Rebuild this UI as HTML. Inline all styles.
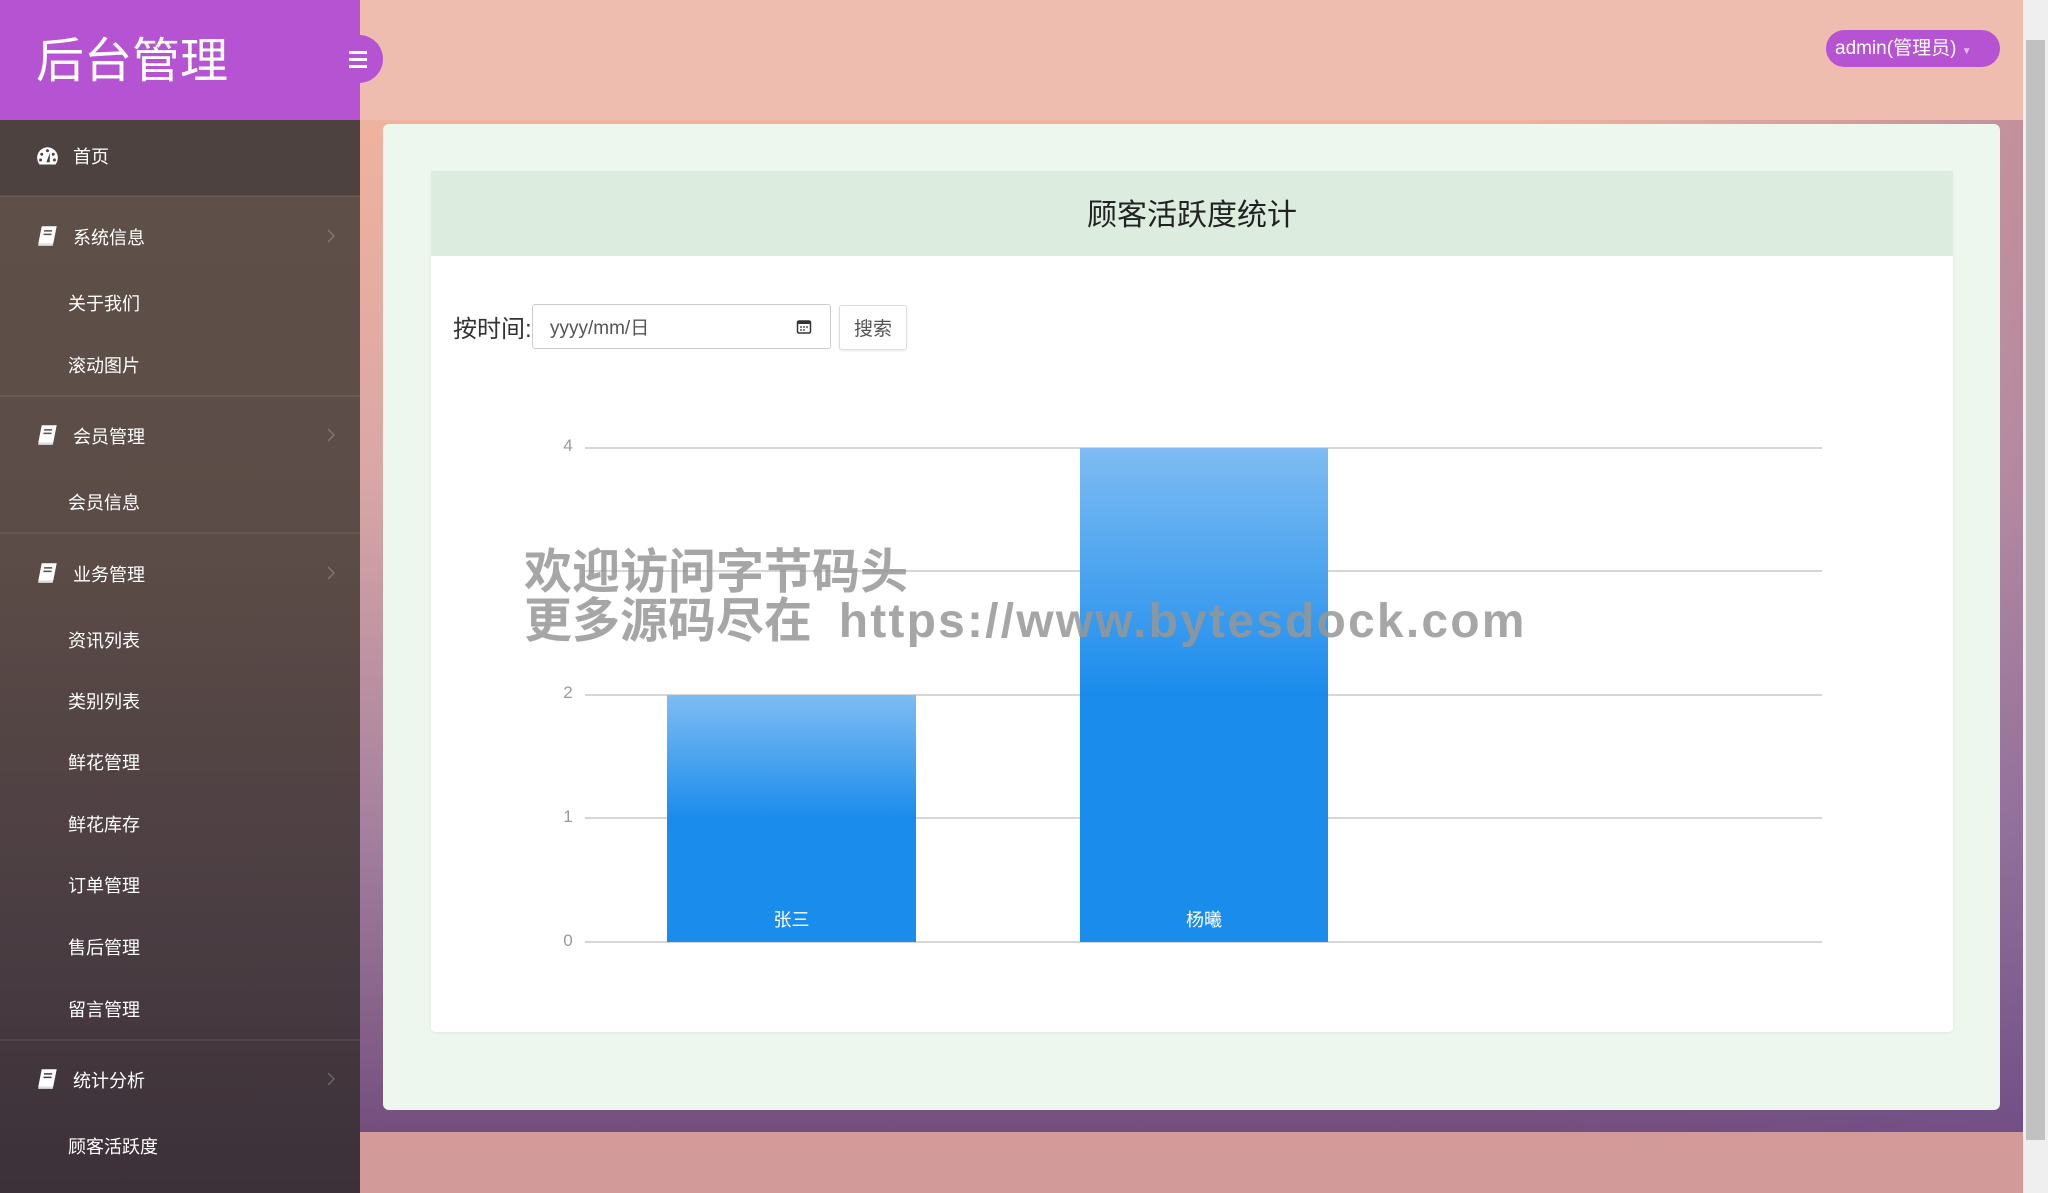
<!DOCTYPE html>
<html><head><meta charset="utf-8"><style>
*{margin:0;padding:0;box-sizing:border-box}
body{width:2048px;height:1193px;overflow:hidden;position:relative;font-family:"Liberation Sans","Noto Sans CJK SC",sans-serif;background:linear-gradient(180deg,#f6b79c 0%,#d9a7a6 40%,#a3809e 70%,#6a4577 100%)}
.bgr{position:absolute;left:360px;top:0;width:1663px;height:1193px;background:linear-gradient(90deg,rgba(0,0,0,0) 70%,rgba(110,80,150,.35) 100%)}
.side{position:absolute;left:0;top:120px;width:360px;height:1073px;background:linear-gradient(180deg,#5f5049 0%,#5c4c47 40%,#4a3d42 75%,#3c3039 100%)}
.logo{position:absolute;left:0;top:0;width:360px;height:120px;background:#b653d3;color:#fff;font-size:48px;line-height:124px;padding-left:36px}
.tog{position:absolute;left:335px;top:35px;width:48px;height:48px;border-radius:50%;background:#b653d3}
.tog i{position:absolute;left:14px;width:18px;height:3px;background:#fff}
.item{position:absolute;left:0;width:360px;color:#fff;font-size:18px}
.hd{padding-left:73px}
.sub{padding-left:68px}
.sep{position:absolute;left:0;width:360px;height:2px;background:rgba(255,255,255,.07)}
.ico{position:absolute;left:36px;width:23px;height:23px}
.chev{position:absolute;left:324px;width:14px;height:14px}
.top{position:absolute;left:360px;top:0;width:1663px;height:120px;background:#efbcb0}
.pill{position:absolute;left:1826px;top:30px;width:174px;height:37px;border-radius:19px;background:#b653d3;color:#fff;font-size:19px;line-height:37px;padding-left:9px}
.card{position:absolute;left:383px;top:124px;width:1617px;height:986px;background:#edf7ee;border-radius:6px}
.panel{position:absolute;left:431px;top:171px;width:1522px;height:861px;background:#fff;border-radius:4px;box-shadow:0 1px 3px rgba(0,0,0,.06)}
.ph{height:85px;background:#dcede0;text-align:center;font-size:30px;line-height:90px;color:#222}
.foot{position:absolute;left:360px;top:1132px;width:1663px;height:61px;background:#d29a98}
.sb{position:absolute;left:2023px;top:0;width:25px;height:1193px;background:#efefef}
.grid{position:absolute;left:585px;width:1237px;height:2px;background:#d6d6d6}
.yl{position:absolute;left:558px;color:#999;font-size:17px;width:20px;text-align:center}
.bar{position:absolute;background:linear-gradient(180deg,#7fbcf3 0%,#1a8cec 50%,#1a8cec 100%)}
.bl{position:absolute;bottom:10px;width:100%;text-align:center;color:#fff;font-size:18px}
.wm{position:absolute;left:524px;color:rgba(150,150,150,.85);font-weight:bold;font-size:48px;line-height:48px;white-space:nowrap}
</style></head><body>
<div class="bgr"></div>
<div class="top"></div>
<div class="card"></div>
<div class="foot"></div>
<div class="side"></div>
<div style="position:absolute;left:0;top:120px;width:360px;height:76px;background:#4e4240"></div>
<div class="logo">后台管理</div>
<div class="tog"><i style="top:16px"></i><i style="top:23px"></i><i style="top:30px"></i></div>

<svg class="ico" style="top:145px" viewBox="0 0 20 20"><path d="M10 2A9 9 0 0 0 1 11c0 2.5 1 4.5 2 6h14c1-1.5 2-3.5 2-6a9 9 0 0 0-9-9z" fill="#fff"/><circle cx="10" cy="5" r="1.3" fill="#4e4240"/><circle cx="5" cy="8" r="1.3" fill="#4e4240"/><circle cx="15" cy="8" r="1.3" fill="#4e4240"/><circle cx="4" cy="13" r="1.3" fill="#4e4240"/><circle cx="16" cy="13" r="1.3" fill="#4e4240"/><path d="M9 15l3-8 0 8z" fill="#4e4240"/></svg>
<div class="item hd" style="top:143px">首页</div>
<div class="sep" style="top:195px"></div>

<svg class="ico" style="top:224px" viewBox="0 0 20 20"><path d="M5 2h13l-3 15H2z" fill="#fff"/><path d="M2 17h13l-.5 2H2z" fill="#ddd"/><path d="M7 6h7M6.5 9h7" stroke="#5d4e47" stroke-width="1.3"/></svg>
<div class="item hd" style="top:224px">系统信息</div>
<svg class="chev" style="top:229px" viewBox="0 0 14 14"><path d="M4 1l6 6-6 6" fill="none" stroke="rgba(255,255,255,.25)" stroke-width="1.3"/></svg>
<div class="item sub" style="top:290px">关于我们</div>
<div class="item sub" style="top:352px">滚动图片</div>
<div class="sep" style="top:395px"></div>

<svg class="ico" style="top:423px" viewBox="0 0 20 20"><path d="M5 2h13l-3 15H2z" fill="#fff"/><path d="M2 17h13l-.5 2H2z" fill="#ddd"/><path d="M7 6h7M6.5 9h7" stroke="#5d4e47" stroke-width="1.3"/></svg>
<div class="item hd" style="top:423px">会员管理</div>
<svg class="chev" style="top:428px" viewBox="0 0 14 14"><path d="M4 1l6 6-6 6" fill="none" stroke="rgba(255,255,255,.25)" stroke-width="1.3"/></svg>
<div class="item sub" style="top:489px">会员信息</div>
<div class="sep" style="top:532px"></div>

<svg class="ico" style="top:561px" viewBox="0 0 20 20"><path d="M5 2h13l-3 15H2z" fill="#fff"/><path d="M2 17h13l-.5 2H2z" fill="#ddd"/><path d="M7 6h7M6.5 9h7" stroke="#594a45" stroke-width="1.3"/></svg>
<div class="item hd" style="top:561px">业务管理</div>
<svg class="chev" style="top:566px" viewBox="0 0 14 14"><path d="M4 1l6 6-6 6" fill="none" stroke="rgba(255,255,255,.25)" stroke-width="1.3"/></svg>
<div class="item sub" style="top:627px">资讯列表</div>
<div class="item sub" style="top:688px">类别列表</div>
<div class="item sub" style="top:749px">鲜花管理</div>
<div class="item sub" style="top:811px">鲜花库存</div>
<div class="item sub" style="top:872px">订单管理</div>
<div class="item sub" style="top:934px">售后管理</div>
<div class="item sub" style="top:996px">留言管理</div>
<div class="sep" style="top:1039px"></div>

<svg class="ico" style="top:1067px" viewBox="0 0 20 20"><path d="M5 2h13l-3 15H2z" fill="#fff"/><path d="M2 17h13l-.5 2H2z" fill="#ddd"/><path d="M7 6h7M6.5 9h7" stroke="#433740" stroke-width="1.3"/></svg>
<div class="item hd" style="top:1067px">统计分析</div>
<svg class="chev" style="top:1072px" viewBox="0 0 14 14"><path d="M4 1l6 6-6 6" fill="none" stroke="rgba(255,255,255,.25)" stroke-width="1.3"/></svg>
<div class="item sub" style="top:1133px">顾客活跃度</div>

<div class="pill">admin(管理员) <span style="font-size:10px;opacity:.6">▼</span></div>

<div class="panel"><div class="ph">顾客活跃度统计</div></div>
<div style="position:absolute;left:453px;top:309px;font-size:24px;color:#333">按时间:</div>
<div style="position:absolute;left:532px;top:304px;width:299px;height:45px;border:1px solid #ccc;border-radius:3px;background:#fff;font-size:19px;color:#555;line-height:47px;padding-left:17px">yyyy/mm/日
<svg style="position:absolute;left:263px;top:14px" width="16" height="16" viewBox="0 0 16 16"><rect x="1.5" y="2" width="13" height="12" rx="1.5" fill="none" stroke="#333" stroke-width="1.5"/><rect x="1.5" y="2" width="13" height="3" fill="#333"/><path d="M4 8h2M7 8h2M10 8h2M4 11h2M7 11h2" stroke="#333" stroke-width="1.3"/></svg></div>
<div style="position:absolute;left:839px;top:305px;width:68px;height:45px;border:1px solid #ddd;border-radius:3px;background:#fff;font-size:19px;color:#555;line-height:47px;text-align:center;box-shadow:0 1px 2px rgba(0,0,0,.08)">搜索</div>

<div class="grid" style="top:447px"></div>
<div class="grid" style="top:570px"></div>
<div class="grid" style="top:694px"></div>
<div class="grid" style="top:817px"></div>
<div class="grid" style="top:941px"></div>
<div class="yl" style="top:436px">4</div>
<div class="yl" style="top:683px">2</div>
<div class="yl" style="top:807px">1</div>
<div class="yl" style="top:931px">0</div>
<div class="bar" style="left:667px;top:695px;width:249px;height:247px"><div class="bl">张三</div></div>
<div class="bar" style="left:1080px;top:448px;width:248px;height:494px"><div class="bl">杨曦</div></div>

<div class="wm" style="top:549px">欢迎访问字节码头</div>
<div class="wm" style="top:598px">更多源码尽在&nbsp; <span style="letter-spacing:2.2px">https://www.bytesdock.com</span></div>

<div class="sb"><div style="position:absolute;left:3px;top:40px;width:19px;height:1100px;background:#c1c1c1"></div></div>
</body></html>
